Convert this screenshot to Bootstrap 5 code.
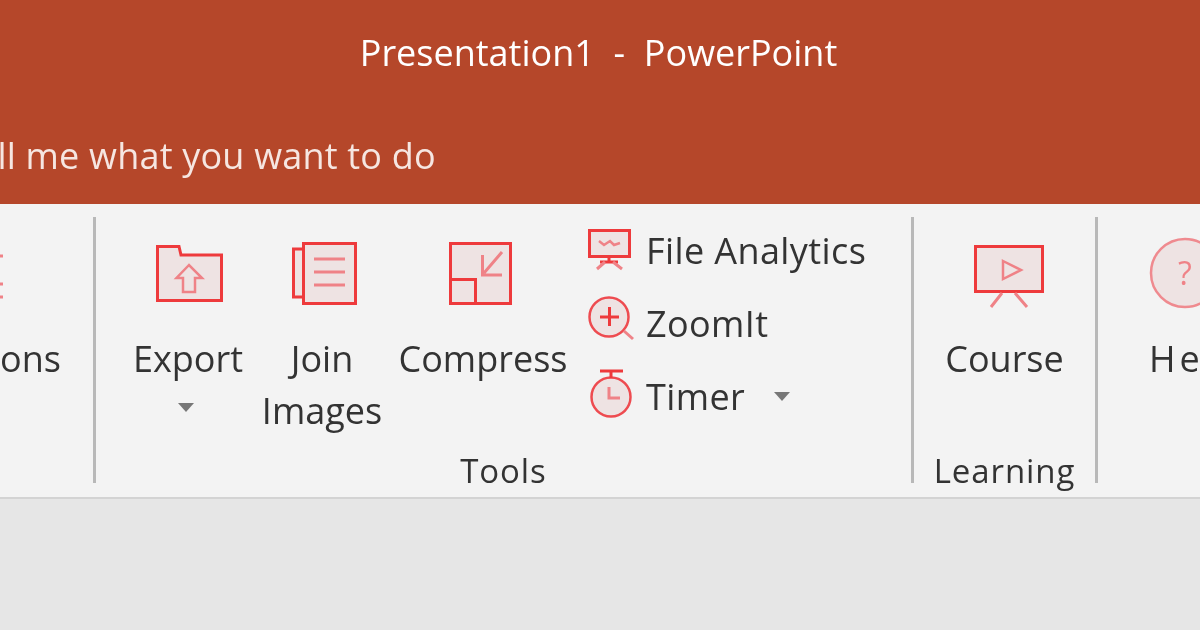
<!doctype html>
<html lang="en"><head><meta charset="utf-8"><title>PowerPoint ribbon</title>
<link href="https://cdn.jsdelivr.net/npm/bootstrap@5.3.0/dist/css/bootstrap.min.css" rel="stylesheet">
<style>
html,body{height:100%;overflow:hidden}
body{background:#e6e6e6;font-family:"Open Sans","Noto Sans",sans-serif;color:#333}
.app-shell{height:630px;overflow:hidden;filter:blur(.5px)}
.title-zone{height:204px;background:#b5472a;color:#fff;overflow:hidden}
.title-line{height:106px;font-size:36px;white-space:pre;padding-right:3px}
.tell-line{height:100px;font-size:36px;letter-spacing:.2px;margin-left:-43px;color:#f6e6e1;white-space:nowrap}
.ribbon-zone{height:295px;background:#f3f3f3;border-bottom:2px solid #d3d3d3;padding:13px 0 14px}
.rib-group{border-right:3px solid #b8b8b8;height:266px}
.rib-first{width:96px}
.rib-tools{width:818px}
.rib-learn{width:184px}
.rib-help{flex:1;overflow:hidden;border-right:0}
.rib-body{flex:1;min-height:0}
.rib-label{height:24px;line-height:24px;font-size:33px;letter-spacing:.9px;text-align:center;white-space:nowrap}
.big-btn{display:flex;flex-direction:column;align-items:center;flex:none;font-size:36px;line-height:52px;text-align:center}
.icon-slot{height:116px;padding-top:25px;flex:none}
.icon-slot svg{display:block;overflow:visible}
.w-export,.w-join{width:134px}
.w-compress{width:188px}
.tools-body{padding-left:25px}
.small-stack{margin-left:11px;row-gap:6px}
.small-row{height:67px;font-size:36px;letter-spacing:.4px;white-space:nowrap}
.small-row svg{flex:none;margin-right:12px;overflow:visible}
.drop-mark{width:0;height:0;border-left:8px solid transparent;border-right:8px solid transparent;border-top:9px solid #777;display:block}
.export-mark{margin-top:18px;margin-right:4px}
.timer-mark{margin-left:29px}
.ico{fill:#eee3e3;stroke:#ee3a3c;stroke-width:3}
.ico-round{fill:#eee3e3;stroke:#ee4b50;stroke-width:2.500}
.ico-pale{fill:#eee3e3;stroke:#ef8a8f;stroke-width:2.500}
.ico-soft{fill:none;stroke:#ef8287;stroke-width:3}
.ico-thin{fill:none;stroke:#ef8287;stroke-width:2.500}
.ico-line{fill:none;stroke:#ee3a3c;stroke-width:3}
.help-mark{font-size:32px;fill:#ef8287;font-family:"Open Sans",sans-serif}
.help-btn{width:140px;margin-left:51px;align-items:flex-start}
.help-word{letter-spacing:4px}
.first-btn{align-items:flex-start}
.ons-word{width:60px;text-align:right}
</style></head><body>
<div class="app-shell d-flex flex-column">
  <header class="title-zone">
    <div class="title-line d-flex align-items-center justify-content-center">Presentation1  -  PowerPoint</div>
    <div class="tell-line d-flex align-items-center">Tell me what you want to do</div>
  </header>
  <section class="ribbon-zone d-flex">
    <div class="rib-group rib-first d-flex flex-column">
      <div class="rib-body">
        <div class="big-btn first-btn">
          <div class="icon-slot"><svg width="4" height="70" viewBox="0 242 4 70"><path class="ico-soft" d="M0 256h3M0 284h3M0 297h3"/></svg></div>
          <div class="ons-word">ons</div>
        </div>
      </div>
    </div>
    <div class="rib-group rib-tools d-flex flex-column">
      <div class="rib-body tools-body d-flex">
        <div class="big-btn w-export">
          <div class="icon-slot"><svg width="70" height="70" viewBox="153 242 70 70"><path class="ico" d="M157.500 246.500H179L181 255H221.500V300.500H157.500Z"/><path class="ico-thin" d="M189 265L176.500 278H183V292H195V278H202Z"/></svg></div>
          <div>Export</div>
          <span class="drop-mark export-mark"></span>
        </div>
        <div class="big-btn w-join">
          <div class="icon-slot"><svg width="70" height="70" viewBox="287 242 70 70"><path class="ico" d="M303 249H293.500V297H303"/><rect class="ico" x="303.500" y="243.500" width="52" height="60"/><path class="ico-soft" d="M314 259H345M314 272H345M314 285H345"/></svg></div>
          <div>Join<br>Images</div>
        </div>
        <div class="big-btn w-compress">
          <div class="icon-slot"><svg width="70" height="70" viewBox="448 242 70 70"><rect class="ico" x="450.500" y="243.500" width="60" height="60"/><path class="ico-line" d="M450 279.500H475.500V303"/><path class="ico-soft" d="M502 252L484 273M482.500 255V275H502"/></svg></div>
          <div>Compress</div>
        </div>
        <div class="small-stack d-flex flex-column">
          <div class="small-row d-flex align-items-center">
            <svg width="46" height="50" viewBox="588 226 46 50"><rect class="ico" x="589.500" y="230.500" width="40" height="26"/><path class="ico-thin" d="M599 241L604 245L610 241L614 245L620 243"/><path class="ico-line" d="M609 257V262M600 262H618"/><path class="ico-soft" d="M605 262L597 269M613 262L622 269"/></svg>
            <span>File Analytics</span>
          </div>
          <div class="small-row d-flex align-items-center">
            <svg width="46" height="50" viewBox="588 299 46 50"><circle class="ico-round" cx="609" cy="317" r="19.500"/><path class="ico-line" stroke-width="2" d="M600 317H619M609.500 307V326"/><path class="ico-soft" d="M624 331L633 339"/></svg>
            <span>ZoomIt</span>
          </div>
          <div class="small-row d-flex align-items-center">
            <svg width="46" height="50" viewBox="588 372 46 50"><circle class="ico-round" cx="611" cy="397" r="19.500"/><path class="ico-line" d="M600 371H623M611 371V378"/><path class="ico-soft" d="M609 387V398H620"/></svg>
            <span>Timer</span>
            <span class="drop-mark timer-mark"></span>
          </div>
        </div>
      </div>
      <div class="rib-label">Tools</div>
    </div>
    <div class="rib-group rib-learn d-flex flex-column">
      <div class="rib-body d-flex justify-content-center">
        <div class="big-btn">
          <div class="icon-slot"><svg width="74" height="70" viewBox="968 242 74 70"><rect class="ico" x="975.500" y="246.500" width="67" height="45"/><path class="ico-thin" d="M1003 261L1021 270L1003 279Z"/><path class="ico-soft" stroke-width="2.500" d="M1002 293L991 307M1015 293L1027 307"/></svg></div>
          <div>Course</div>
        </div>
      </div>
      <div class="rib-label">Learning</div>
    </div>
    <div class="rib-group rib-help d-flex">
      <div class="big-btn help-btn">
        <div class="icon-slot"><svg width="84" height="70" viewBox="1149 242 84 70"><circle class="ico-pale" cx="1185" cy="273" r="34"/><text class="help-mark" x="1185" y="285" text-anchor="middle">?</text></svg></div>
        <div class="help-word">Help</div>
      </div>
    </div>
  </section>
</div>
</body></html>
